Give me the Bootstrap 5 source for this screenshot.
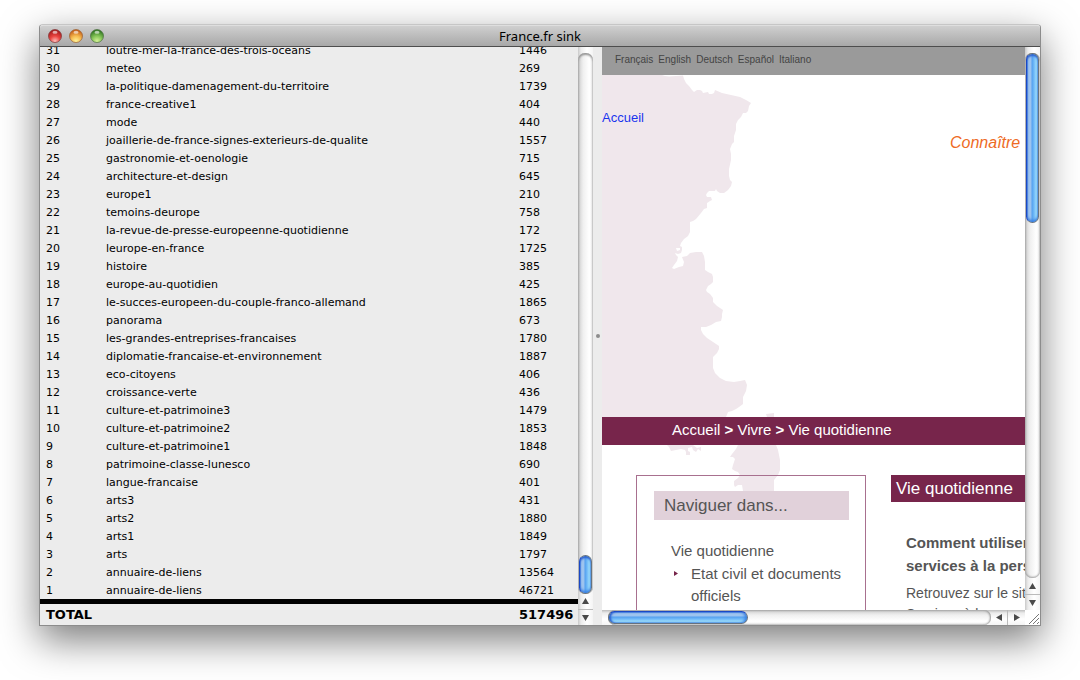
<!DOCTYPE html>
<html lang="fr">
<head>
<meta charset="utf-8">
<meta name="viewport" content="width=device-width, initial-scale=1">
<title>France.fr sink</title>
<link href="https://cdn.jsdelivr.net/npm/bootstrap@5.3.0/dist/css/bootstrap.min.css" rel="stylesheet">
<style>
  :root { --plum: #77254b; --pane: #ececec; --ink: #555; }
  body { background: #fff; color: #000; }
  .desk { height: 100vh; padding: 24px 39px 54px; }
  button { border: 0; padding: 0; background: none; }

  /* window frame */
  .win { border: 1px solid #8c8c8c; border-top-color: #c6c6c6; border-radius: 4px 4px 0 0; background: var(--pane); box-shadow: 0 14px 38px rgba(0,0,0,.52); }
  .titlebar { height: 22px; background: linear-gradient(#cfcfcf, #a8a8a8); border-top: 1px solid #dedede; border-bottom: 1px solid #4d4d4d; border-radius: 3px 3px 0 0; }
  .titlebar h1 { font: 13px/20px "Noto Sans", "Open Sans", sans-serif; }
  .lights { left: 8px; top: 3px; gap: 7px; }
  .lights svg { display: block; width: 14px; height: 14px; }

  /* counters */
  .left { flex: 562 1 0; min-width: 0; }
  .right { flex: 438 1 0; min-width: 0; }
  .counts { width: 100%; table-layout: fixed; border-collapse: separate; border-spacing: 0; font: 11px/16px "DejaVu Sans", sans-serif; }
  .counts td, .counts th { padding: 2px 0 0; height: 18px; white-space: nowrap; font-weight: 400; }
  .counts .rank { width: 66px; padding-left: 6px; }
  .counts .hits { width: 59px; }
  .counts tfoot th, .counts tfoot td { padding-top: 1px; border-top: 5px solid #000; height: 26px; font-size: 13px; line-height: 20px; font-weight: 700; }

  /* scroll bars */
  .vbar { flex: 0 0 15px; padding-top: 6px; background: linear-gradient(90deg, #c9c9c9, #ececec 20%, #fff 60%, #f4f4f4); }
  .vtrack { border-radius: 7px; box-shadow: inset 0 2px 2px #9a9a9a, inset 0 -1px 2px #a8a8a8, inset 1px 0 2px #bbb; background: linear-gradient(90deg, #cfcfcf, #f0f0f0 35%, #fff 75%, #efefef); }
  .hbar { flex: 0 0 15px; padding-left: 6px; background: linear-gradient(#bcbcbc, #ececec 20%, #fff 60%, #f4f4f4); }
  .htrack { border-radius: 7px; box-shadow: inset 2px 0 2px #9a9a9a, inset -1px 0 2px #a0a0a0, inset 0 1px 2px #bbb; background: linear-gradient(#cfcfcf, #f0f0f0 35%, #fff 75%, #efefef); }
  .vthumb, .hthumb { border-radius: 7px; border: 1px solid #66727f; }
  .vthumb { margin: 0 1px; border-left-color: #1b48c4; background: linear-gradient(90deg, #4a80e0, #a9c9ee 12%, #98c2f0 38%, #539fee 44%, #72bbf8 65%, #a5e6fd 88%, #8fd0f4); box-shadow: inset 0 2px 2px #2c62d2, inset 0 -2px 3px #3a80e2; }
  .hthumb { margin: 1px 0; border-top-color: #1b48c4; background: linear-gradient(#4a80e0, #a9c9ee 12%, #98c2f0 38%, #539fee 44%, #72bbf8 65%, #a5e6fd 88%, #8fd0f4); box-shadow: inset 2px 0 2px #2c62d2, inset -2px 0 3px #3a80e2; }
  .left .vthumb { height: 39px; }
  .right .vthumb { height: 170px; }
  .hthumb { width: 140px; }
  .arrow { flex: 0 0 16px; display: flex; align-items: center; justify-content: center; }
  .vbar .arrow + .arrow { border-top: 1px solid #bbb; }
  .hbar .arrow + .arrow { flex-basis: 18px; border-left: 1px solid #bbb; }
  .left .arrow { flex-basis: 15px; }
  .left .arrow + .arrow { flex-basis: 16px; }
  .arrow svg { width: 7px; height: 7px; fill: #4a4a4a; }
  .splitter { flex: 0 0 9px; background: var(--pane); }
  .splitter span { width: 4px; height: 4px; border-radius: 50%; background: #8d8d8d; }
  .grip { flex: 0 0 15px; background: #fff; }

  /* embedded page */
  .site { background: #fff; font-family: "Liberation Sans", Arial, sans-serif; color: var(--ink); }
  .site a { color: inherit; text-decoration: none; }
  .map { left: 0; top: 28px; width: 200px; height: 416px; }
  .langs { height: 28px; padding: 0 13px; gap: 5px; background: #9a9a9a; color: #444; font-size: 10px; line-height: 25px; }
  .hero { height: 342px; padding-top: 33px; line-height: 20px; }
  .site .home { color: #1a35ee; font-size: 13px; }
  .hero p { margin: 5px 0 0 348px; font-size: 16px; font-style: italic; color: #ee6b25; }
  .trail { height: 28px; padding-left: 70px; background: var(--plum); color: #fff; font-size: 15px; line-height: 26px; }
  .cols { padding: 30px 0 0 34px; gap: 25px; }
  .sidenav { flex: 0 0 230px; height: 300px; padding: 15px 16px 0 17px; border: 1px solid #a8708f; font-size: 15px; line-height: 22px; }
  .sidenav h2 { margin: 0 0 20px; padding-left: 10px; font-size: 17px; line-height: 29px; background: #e1d1da; }
  .sidenav p, .sidenav ul { margin: 0; padding: 0 0 0 17px; }
  .sidenav p { padding-bottom: 1px; }
  .sidenav li { list-style: none; padding-left: 20px; }
  .sidenav li svg { left: 3px; top: 8px; width: 4px; height: 5px; fill: var(--plum); }
  .story { flex: 0 0 400px; }
  .story h2 { margin: 0 0 29px; padding-left: 5px; background: var(--plum); color: #fff; font-size: 17px; line-height: 27px; }
  .story h3 { margin: 0 0 6px 15px; font-size: 15px; line-height: 23px; font-weight: 700; }
  .story p { margin: 0 0 0 15px; font-size: 14px; line-height: 21px; }
</style>
</head>
<body>
<div class="desk d-flex">
  <main class="win d-flex flex-column flex-grow-1">
    <header class="titlebar position-relative flex-shrink-0">
      <h1 class="m-0 text-center">France.fr sink</h1>
      <div class="lights d-flex position-absolute">
        <button type="button" aria-label="Fermer"><svg viewBox="0 0 14 14"><defs><radialGradient id="r" cx=".5" cy=".9" r=".8"><stop offset="0" stop-color="#ffc0bd"/><stop offset=".5" stop-color="#ea4440"/><stop offset="1" stop-color="#a91f20"/></radialGradient></defs><circle cx="7" cy="7" r="6.5" fill="url(#r)" stroke="#7e3536" stroke-opacity=".7"/><ellipse cx="7" cy="3.2" rx="2.500" ry="1.500" fill="#fff" opacity=".6"/></svg></button>
        <button type="button" aria-label="Réduire"><svg viewBox="0 0 14 14"><defs><radialGradient id="y" cx=".5" cy=".9" r=".8"><stop offset="0" stop-color="#fff59a"/><stop offset=".5" stop-color="#f6bb50"/><stop offset="1" stop-color="#c8651c"/></radialGradient></defs><circle cx="7" cy="7" r="6.5" fill="url(#y)" stroke="#9a6030" stroke-opacity=".7"/><ellipse cx="7" cy="3.2" rx="2.500" ry="1.500" fill="#fff" opacity=".6"/></svg></button>
        <button type="button" aria-label="Agrandir"><svg viewBox="0 0 14 14"><defs><radialGradient id="g" cx=".5" cy=".9" r=".8"><stop offset="0" stop-color="#d8f59a"/><stop offset=".5" stop-color="#86c558"/><stop offset="1" stop-color="#357a25"/></radialGradient></defs><circle cx="7" cy="7" r="6.5" fill="url(#g)" stroke="#4c7040" stroke-opacity=".7"/><ellipse cx="7" cy="3.2" rx="2.500" ry="1.500" fill="#fff" opacity=".6"/></svg></button>
      </div>
    </header>

    <div class="d-flex flex-grow-1 overflow-hidden">
      <section class="left d-flex">
        <div class="d-flex flex-column justify-content-end flex-grow-1 overflow-hidden">
          <table class="counts">
            <tbody>
              <tr><td class="rank">31</td><td>loutre-mer-la-france-des-trois-oceans</td><td class="hits">1446</td></tr>
              <tr><td class="rank">30</td><td>meteo</td><td>269</td></tr>
              <tr><td class="rank">29</td><td>la-politique-damenagement-du-territoire</td><td>1739</td></tr>
              <tr><td class="rank">28</td><td>france-creative1</td><td>404</td></tr>
              <tr><td class="rank">27</td><td>mode</td><td>440</td></tr>
              <tr><td class="rank">26</td><td>joaillerie-de-france-signes-exterieurs-de-qualite</td><td>1557</td></tr>
              <tr><td class="rank">25</td><td>gastronomie-et-oenologie</td><td>715</td></tr>
              <tr><td class="rank">24</td><td>architecture-et-design</td><td>645</td></tr>
              <tr><td class="rank">23</td><td>europe1</td><td>210</td></tr>
              <tr><td class="rank">22</td><td>temoins-deurope</td><td>758</td></tr>
              <tr><td class="rank">21</td><td>la-revue-de-presse-europeenne-quotidienne</td><td>172</td></tr>
              <tr><td class="rank">20</td><td>leurope-en-france</td><td>1725</td></tr>
              <tr><td class="rank">19</td><td>histoire</td><td>385</td></tr>
              <tr><td class="rank">18</td><td>europe-au-quotidien</td><td>425</td></tr>
              <tr><td class="rank">17</td><td>le-succes-europeen-du-couple-franco-allemand</td><td>1865</td></tr>
              <tr><td class="rank">16</td><td>panorama</td><td>673</td></tr>
              <tr><td class="rank">15</td><td>les-grandes-entreprises-francaises</td><td>1780</td></tr>
              <tr><td class="rank">14</td><td>diplomatie-francaise-et-environnement</td><td>1887</td></tr>
              <tr><td class="rank">13</td><td>eco-citoyens</td><td>406</td></tr>
              <tr><td class="rank">12</td><td>croissance-verte</td><td>436</td></tr>
              <tr><td class="rank">11</td><td>culture-et-patrimoine3</td><td>1479</td></tr>
              <tr><td class="rank">10</td><td>culture-et-patrimoine2</td><td>1853</td></tr>
              <tr><td class="rank">9</td><td>culture-et-patrimoine1</td><td>1848</td></tr>
              <tr><td class="rank">8</td><td>patrimoine-classe-lunesco</td><td>690</td></tr>
              <tr><td class="rank">7</td><td>langue-francaise</td><td>401</td></tr>
              <tr><td class="rank">6</td><td>arts3</td><td>431</td></tr>
              <tr><td class="rank">5</td><td>arts2</td><td>1880</td></tr>
              <tr><td class="rank">4</td><td>arts1</td><td>1849</td></tr>
              <tr><td class="rank">3</td><td>arts</td><td>1797</td></tr>
              <tr><td class="rank">2</td><td>annuaire-de-liens</td><td>13564</td></tr>
              <tr><td class="rank">1</td><td>annuaire-de-liens</td><td>46721</td></tr>
            </tbody>
            <tfoot>
              <tr><th class="rank" colspan="2" scope="row">TOTAL</th><td>517496</td></tr>
            </tfoot>
          </table>
        </div>
        <div class="vbar d-flex flex-column">
          <div class="vtrack d-flex flex-column justify-content-end flex-grow-1"><div class="vthumb"></div></div>
          <button class="arrow" type="button" aria-label="Monter"><svg viewBox="0 0 7 7"><path d="M3.500 0 7 6H0z"/></svg></button>
          <button class="arrow" type="button" aria-label="Descendre"><svg viewBox="0 0 7 7"><path d="M0 1H7L3.500 7z"/></svg></button>
        </div>
        <div class="splitter d-flex align-items-center justify-content-center"><span></span></div>
      </section>

      <section class="right d-flex flex-column">
        <div class="d-flex flex-grow-1 overflow-hidden">
          <div class="site position-relative flex-grow-1 overflow-hidden">
            <svg class="map position-absolute" viewBox="602 75 200 416" fill="#f0e7ec" aria-hidden="true">
              <path d="M602 75L662 75L665 76L669 76.500L683 75.500L684 79L686 83L689 86L692 90L694 92L697 90L700 90L702 91L703 93L708 92L709 94L712 94L714 93L715 90L722 93L731 95L740 97L746 100L751 103L749 106L748 111L746 113L743 113L741 117L738 120L736 124L736 130L734 136L734 142L732 144L730 149L731 154L731 160L729 169L729 176L730 180L732 182L731 186L728 190L724 193L720 193L717 191L716 189L715 191L709 191L707 193L706 195L707 197L711 197L712 200L710 201L707 203L707 208L704 209L701 213L696 219L693 221L690 222L690 227L690 232L688 236L684 239L681 243L680 246L682 247L682 250L681 253L678 254L675 253L676 255L678 257L677 261L674 265L672 268L674 269L679 267L683 266L684 262L682 257L687 256L690 253L696 252L702 252L704 256L705 262L705 270L708 272L712 274L713 277L713 282L711 284L708 286L706 290L707 292L710 294L713 298L713 302L717 306L720 308L723 310L722 314L722 317L721 321L716 322L711 325L706 327L701 327L701 330L703 334L707 338L713 342L719 346L719 349L717 353L713 357L713 368L715 373L720 378L726 381L734 382L740 381L745 380L747 385L746 391L743 397L743 404L739 407L736 409L732 411L728 412L726 417L602 417Z"/>
              <path d="M676 248L680 248L680 250L677 251Z" fill="#fff"/>
              <path d="M766 414L774 413L774 420L768 420ZM667 445L669 447L671 451L676 450L681 449L685 450L686 452L686 455L690 455L690 452L688 451L688 448L692 447L693 450L696 452L698 449L701 451L701 447L697 448L693 445Z"/>
              <path d="M738 445L736 449L732 454L730 457L733 457L735 459L733 465L732 469L735 471L738 472L740 475L738 478L734 481L734 485L735 487L738 485L742 485L743 491L774 491L774 480L778 475L780 470L780 460L778 450L776 445Z"/>
            </svg>
            <nav class="langs d-flex position-relative" aria-label="Langues"><a href="#">Français</a><a href="#">English</a><a href="#">Deutsch</a><a href="#">Español</a><a href="#">Italiano</a></nav>
            <div class="hero position-relative text-nowrap">
              <a class="home d-block" href="#">Accueil</a>
              <p>Connaître</p>
            </div>
            <nav class="trail position-relative text-nowrap" aria-label="Fil d'Ariane"><a href="#">Accueil</a> <b>&gt;</b> <a href="#">Vivre</a> <b>&gt;</b> <a href="#">Vie quotidienne</a></nav>
            <div class="cols d-flex align-items-start position-relative">
              <nav class="sidenav" aria-label="Naviguer">
                <h2 class="fw-normal">Naviguer dans...</h2>
                <p><a href="#">Vie quotidienne</a></p>
                <ul>
                  <li class="position-relative"><svg class="position-absolute" viewBox="0 0 4 5"><path d="M0 0 4 2.500 0 5z"/></svg><a href="#">Etat civil et documents officiels</a></li>
                </ul>
              </nav>
              <article class="story text-nowrap">
                <h2 class="fw-normal">Vie quotidienne</h2>
                <h3>Comment utiliser les<br>services à la personne</h3>
                <p>Retrouvez sur le site<br>Services à la personne</p>
              </article>
            </div>
          </div>
          <div class="vbar d-flex flex-column">
            <div class="vtrack flex-grow-1"><div class="vthumb"></div></div>
            <button class="arrow" type="button" aria-label="Monter"><svg viewBox="0 0 7 7"><path d="M3.500 0 7 6H0z"/></svg></button>
            <button class="arrow" type="button" aria-label="Descendre"><svg viewBox="0 0 7 7"><path d="M0 1H7L3.500 7z"/></svg></button>
          </div>
        </div>
        <div class="d-flex flex-shrink-0">
          <div class="hbar d-flex flex-grow-1">
            <div class="htrack d-flex flex-grow-1"><div class="hthumb"></div></div>
            <button class="arrow" type="button" aria-label="Vers la gauche"><svg viewBox="0 0 7 7"><path d="M6 0V7L0 3.500z"/></svg></button>
            <button class="arrow" type="button" aria-label="Vers la droite"><svg viewBox="0 0 7 7"><path d="M1 0V7L7 3.500z"/></svg></button>
          </div>
          <svg class="grip" width="15" height="15" viewBox="0 0 15 15" stroke="#777" aria-hidden="true"><path d="M4 14 14 4M8 14 14 8M12 14 14 12"/></svg>
        </div>
      </section>
    </div>
  </main>
</div>
<script src="https://cdn.jsdelivr.net/npm/bootstrap@5.3.0/dist/js/bootstrap.bundle.min.js"></script>
</body>
</html>
